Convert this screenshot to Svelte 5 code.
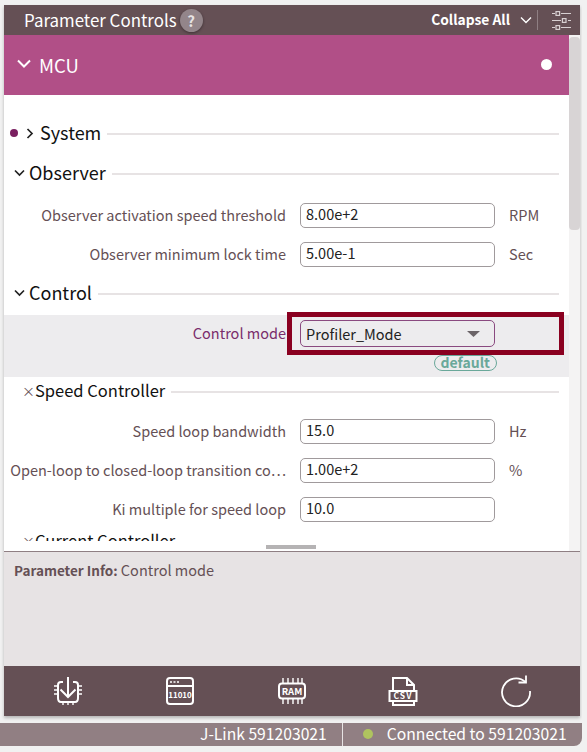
<script lang="ts">
	const observer = [
		{ label: 'Observer activation speed threshold', value: '8.00e+2', unit: 'RPM' },
		{ label: 'Observer minimum lock time', value: '5.00e-1', unit: 'Sec' }
	];
	const speed = [
		{ label: 'Speed loop bandwidth', value: '15.0', unit: 'Hz' },
		{ label: 'Open-loop to closed-loop transition co…', value: '1.00e+2', unit: '%' },
		{ label: 'Ki multiple for speed loop', value: '10.0', unit: '' }
	];
</script>

<div class="page">
	<section class="panel">
		<header class="top">
			<span class="title">Parameter Controls</span>
			<span class="help">?</span>
			<span class="collapse">Collapse All</span>
			<svg class="collapse-chev" width="12" height="8" viewBox="0 0 12 8"><path d="M1 1.5 6 6.5 11 1.5" fill="none" stroke="#fff" stroke-width="1.4" /></svg>
			<span class="divider"></span>
			<svg class="tune" width="20" height="19" viewBox="0 0 20 19" fill="none" stroke="#d8d0d2" stroke-width="1.2">
				<path d="M0 2.5h3M9 2.5h10M0 9.5h9M16 9.5h3M0 16.5h3M9 16.5h10" />
				<rect x="4" y="0.6" width="3.6" height="3.8" />
				<rect x="10.4" y="7.6" width="3.6" height="3.8" />
				<rect x="4" y="14.6" width="3.6" height="3.8" />
			</svg>
		</header>

		<div class="body">
			<div class="main">
				<div class="mcu">
					<svg width="14" height="10" viewBox="0 0 14 10"><path d="M1 1.5 7 7.5 13 1.5" fill="none" stroke="#fff" stroke-width="2" /></svg>
					<span class="mcu-name">MCU</span>
					<span class="mcu-dot"></span>
				</div>

				<div class="scroll">
					<div class="heading system">
						<span class="bullet"></span>
						<svg width="8" height="11" viewBox="0 0 8 11"><path d="M1.5 1 6 5.5 1.5 10" fill="none" stroke="#222" stroke-width="1.7" /></svg>
						<span class="name">System</span>
						<i></i>
					</div>

					<div class="heading observer">
						<svg width="11" height="8" viewBox="0 0 11 8"><path d="M1 1.5 5.5 6 10 1.5" fill="none" stroke="#222" stroke-width="1.7" /></svg>
						<span class="name">Observer</span>
						<i></i>
					</div>

					{#each observer as row}
						<div class="row">
							<span class="label">{row.label}</span>
							<div class="input">{row.value}</div>
							<span class="unit">{row.unit}</span>
						</div>
					{/each}

					<div class="heading control">
						<svg width="11" height="8" viewBox="0 0 11 8"><path d="M1 1.5 5.5 6 10 1.5" fill="none" stroke="#222" stroke-width="1.7" /></svg>
						<span class="name">Control</span>
						<i></i>
					</div>

					<div class="active">
						<div class="row">
							<span class="label purple">Control mode</span>
							<div class="input select">
								Profiler_Mode
								<svg width="13" height="6" viewBox="0 0 13 6"><path d="M0 0h13L6.5 6z" fill="#6b6468" /></svg>
							</div>
						</div>
						<div class="badge-line"><span class="badge">default</span></div>
						<div class="callout"></div>
					</div>

					<div class="heading sub">
						<span class="x">×</span>
						<span class="name">Speed Controller</span>
						<i></i>
					</div>

					{#each speed as row}
						<div class="row speed">
							<span class="label">{row.label}</span>
							<div class="input">{row.value}</div>
							<span class="unit">{row.unit}</span>
						</div>
					{/each}

					<div class="heading sub current">
						<span class="x">×</span>
						<span class="name">Current Controller</span>
						<i></i>
					</div>
				</div>
				<div class="hbar"><span></span></div>
			</div>
			<div class="vbar"><span></span></div>
		</div>

		<div class="info"><b>Parameter Info:</b> Control mode</div>

		<footer class="tools">
			<svg width="30" height="30" viewBox="0 0 30 30" fill="none" stroke="#fff" stroke-width="2">
				<path d="M10 6H8Q5 6 5 9V22Q5 26 8 26H22Q25 26 25 22V9Q25 6 22 6H20" />
				<path d="M15 1V21M7.5 13.5 15 21 22.5 13.5" />
				<path d="M1 10h4M1 14h4M1 18h4M25 10h4M25 14h4M25 18h4M10 26v3M15 26v3M20 26v3" stroke-width="1.4" />
			</svg>
			<svg width="30" height="30" viewBox="0 0 30 30" fill="none" stroke="#fff" stroke-width="2">
				<rect x="2" y="2" width="26" height="26" rx="3" />
				<path d="M2 10H28" />
				<path d="M5 6h2M8.5 6h2M12 6h2" stroke-width="1.5" />
				<text x="15" y="22" text-anchor="middle" class="icon-text" fill="#fff" stroke="none" font-size="8">11010</text>
			</svg>
			<svg width="30" height="30" viewBox="0 0 30 30" fill="none" stroke="#fff" stroke-width="2">
				<rect x="2" y="7.5" width="26" height="15" rx="3" />
				<path d="M6 2v5M11 2v5M16 2v5M21 2v5M25 2v5M6 23v5M11 23v5M16 23v5M21 23v5M25 23v5" stroke-width="1.4" />
				<text x="15" y="19" text-anchor="middle" class="icon-text" fill="#fff" stroke="none" font-size="9.5">RAM</text>
			</svg>
			<svg width="30" height="30" viewBox="0 0 30 30" fill="none" stroke="#fff" stroke-width="2">
				<path d="M5 15V2H19L26 9V15M19 2V9H26M5 25V29H26V25" />
				<rect x="1.5" y="15" width="27" height="10" />
				<text x="15" y="23" text-anchor="middle" class="icon-text spaced" fill="#fff" stroke="none" font-size="8.5">CSV</text>
			</svg>
			<svg width="32" height="32" viewBox="0 0 32 32" fill="none" stroke="#fff" stroke-width="1.8">
				<path d="M25.5 7A14 14 0 1 0 30 16" />
				<path d="M18.5 7.5H26V0.5" />
			</svg>
		</footer>
	</section>

	<div class="status">
		<span class="link">J-Link 591203021</span>
		<span class="sep"></span>
		<span class="led"></span>
		<span class="conn">Connected to 591203021</span>
	</div>
</div>

<style>
	:global(body) {
		margin: 0;
		background: #f1f1f1;
	}

	.page {
		width: 582px;
		height: 752px;
		padding-top: 5px;
		box-sizing: border-box;
		font-family: 'Noto Sans CJK SC', 'Noto Sans', sans-serif;
		color: #111;
		overflow: hidden;
	}

	.panel {
		width: 576px;
		margin-left: 4px;
		display: flex;
		flex-direction: column;
		box-shadow: 0 2px 3px rgba(0, 0, 0, 0.25);
	}

	.top {
		height: 30px;
		display: flex;
		align-items: center;
		background: #655055;
		color: #fff;
		padding-left: 20px;
	}

	.title {
		font-size: 16.9px;
		line-height: 1;
	}

	.help {
		width: 23px;
		height: 23px;
		margin-left: 3px;
		border-radius: 50%;
		background: #93858a;
		box-shadow: 0 1px 3px rgba(0, 0, 0, 0.4);
		color: #e7e3e4;
		font-weight: 700;
		font-size: 15px;
		line-height: 23px;
		text-align: center;
	}

	.collapse {
		margin-left: auto;
		font-size: 13.8px;
		font-weight: 700;
		line-height: 1;
	}

	.collapse-chev {
		margin-left: 10px;
	}

	.divider {
		width: 1px;
		height: 20px;
		margin: 0 14px 0 5px;
		background: #8f7f83;
	}

	.tune {
		margin-right: 8px;
	}

	.body {
		height: 516px;
		display: flex;
		background: #fff;
	}

	.main {
		width: 565px;
		position: relative;
	}

	.mcu {
		height: 60px;
		display: flex;
		align-items: center;
		padding: 0 17px 2px 13px;
		background: #b14f87;
		color: #fff;
		box-sizing: border-box;
	}

	.mcu-name {
		margin: 2px 0 0 8px;
		font-size: 18.5px;
	}

	.mcu-dot {
		width: 11px;
		height: 11px;
		margin-left: auto;
		border-radius: 50%;
		background: #fff;
	}

	.scroll {
		height: 446px;
		overflow: hidden;
		position: relative;
	}

	.heading {
		display: flex;
		align-items: center;
		height: 26px;
		padding-right: 10px;
		font-size: 18px;
		line-height: 26px;
		color: #111;
	}

	.name {
		margin-top: -2px;
	}

	.heading i {
		flex: 1;
		height: 2px;
		margin: 2px 0 0 6px;
		background: #e7e3e4;
	}

	.system {
		margin-top: 25px;
		padding-left: 6px;
	}

	.bullet {
		width: 8px;
		height: 8px;
		border-radius: 50%;
		background: #7a1f60;
		margin-right: 8px;
	}

	.system .name {
		margin-left: 6px;
	}

	.observer {
		margin-top: 14px;
		padding-left: 10px;
	}

	.observer .name,
	.control .name {
		margin-left: 4px;
	}

	.control {
		margin-top: 13px;
		padding-left: 10px;
	}

	.row {
		display: grid;
		grid-template-columns: 282px 195px 1fr;
		column-gap: 14px;
		align-items: center;
		height: 25px;
		font-size: 14.5px;
	}

	.observer + .row {
		margin-top: 17px;
	}

	.row + .row {
		margin-top: 14px;
	}

	.label {
		margin-top: -2px;
		text-align: right;
		color: #655055;
		white-space: nowrap;
	}

	.purple {
		color: #7a2d6b;
	}

	.input {
		height: 25px;
		box-sizing: border-box;
		padding-left: 5px;
		border: 1px solid #a09a9c;
		border-radius: 5px;
		line-height: 20px;
		color: #222;
		background: #fff;
	}

	.unit {
		margin-top: -2px;
		color: #655055;
	}

	.active {
		position: relative;
		height: 62px;
		margin-top: 9px;
		padding-top: 5px;
		box-sizing: border-box;
		background: #edecee;
	}

	.select {
		display: flex;
		align-items: center;
		justify-content: space-between;
		height: 27px;
		padding-right: 14px;
		background: #edecee;
		border-color: #8a4a80;
	}

	.active .row {
		height: 27px;
	}

	.badge-line {
		display: flex;
		justify-content: flex-end;
		padding-right: 72px;
		margin-top: 8px;
	}

	.badge {
		height: 16px;
		padding: 0 6px;
		border: 1px solid #6aa89a;
		border-radius: 9px;
		box-sizing: border-box;
		color: #6aa89a;
		font-size: 14px;
		font-weight: 700;
		line-height: 13px;
	}

	.callout {
		position: absolute;
		left: 283px;
		top: -3px;
		width: 277px;
		height: 43px;
		box-sizing: border-box;
		border: 5px solid #8a0020;
	}

	.sub {
		margin-top: 1px;
		padding-left: 18px;
		font-size: 16.5px;
		height: 26px;
	}

	.x {
		color: #655055;
		font-size: 13px;
	}

	.sub + .row {
		margin-top: 15px;
	}

	.current {
		margin-top: 6px;
	}

	.hbar {
		position: absolute;
		left: 262px;
		bottom: 2px;
		width: 50px;
		height: 4px;
	}

	.hbar span {
		display: block;
		height: 100%;
		background: #b5b3b4;
	}

	.vbar {
		width: 11px;
		padding-top: 2px;
		background: #f4f3f3;
	}

	.vbar span {
		display: block;
		height: 193px;
		border-radius: 4px;
		background: #d8d4d5;
	}

	.info {
		height: 115px;
		box-sizing: border-box;
		padding: 8px 10px 0;
		background: #e7e3e4;
		border-top: 1px solid #8f7f83;
		font-size: 14.5px;
		line-height: 20px;
		color: #655055;
	}

	.info b {
		font-size: 13.5px;
	}

	.tools {
		height: 50px;
		display: flex;
		align-items: center;
		justify-content: space-between;
		padding: 0 48px 0 49px;
		background: #655055;
	}

	.icon-text {
		font-family: 'Noto Sans CJK SC', sans-serif;
		font-weight: 700;
	}

	.spaced {
		letter-spacing: 1px;
	}

	.status {
		height: 23px;
		margin-top: 7px;
		padding-bottom: 1px;
		box-sizing: border-box;
		display: flex;
		align-items: center;
		background: #917f83;
		border-radius: 0 0 8px 0;
		color: #fff;
		font-size: 15.7px;
		line-height: 1;
		white-space: nowrap;
	}

	.link {
		margin-left: 200px;
	}

	.sep {
		width: 1px;
		height: 23px;
		margin-left: 15px;
		background: #e7e3e4;
	}

	.led {
		width: 10px;
		height: 10px;
		margin-left: 20px;
		border-radius: 50%;
		background: #afc45f;
	}

	.conn {
		margin-left: 14px;
	}
</style>
